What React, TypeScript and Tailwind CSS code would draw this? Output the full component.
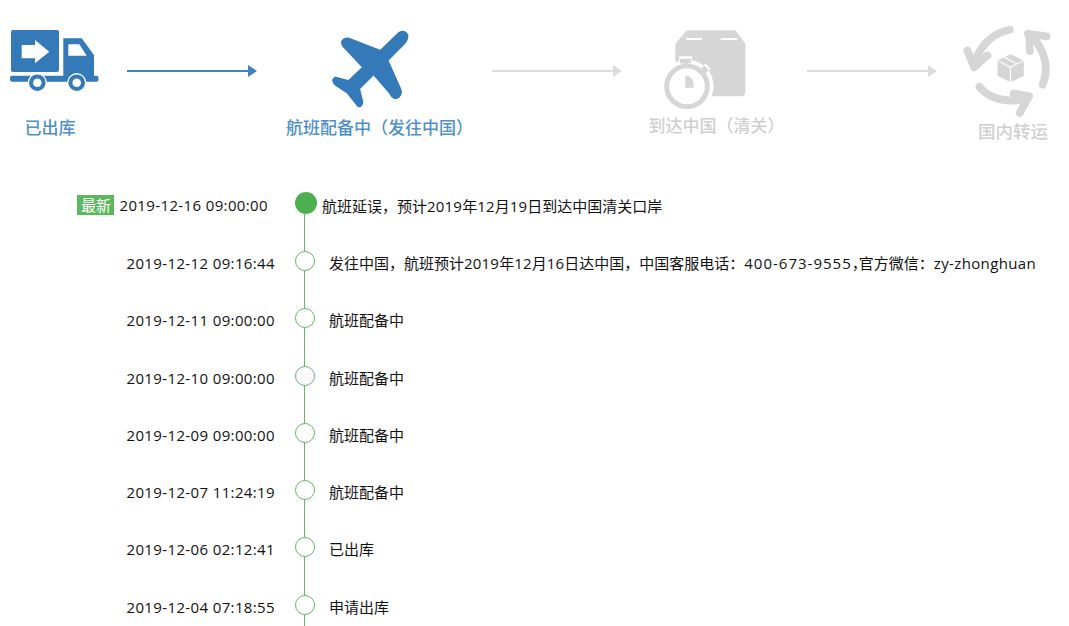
const FONT = 'font-["Open_Sans","Noto_Sans_CJK_SC",sans-serif]'

// ── Icons ──────────────────────────────────────────────────────────────────

function TruckIcon() {
  return (
    <svg width="90" height="63" viewBox="10 30 90 63">
      <rect x="11" y="30" width="48" height="42" rx="2" fill="#347ab9" />
      <path d="M21.7 45H35V40L49.3 51.7 35 63.3V58.3H21.7Z" fill="#fff" />
      <path d="M63.3 38.3H81.7L94 55V76H63.3Z" fill="#347ab9" />
      <path d="M68.3 44.3H79.3L86.7 55.7H68.3Z" fill="#fff" />
      <rect x="10" y="75.7" width="88.5" height="6" rx="2" fill="#347ab9" />
      <circle cx="37.3" cy="82.7" r="9.6" fill="#fff" />
      <circle cx="76.7" cy="82.7" r="9.6" fill="#fff" />
      <circle cx="37.3" cy="82.7" r="6.3" fill="#fff" stroke="#347ab9" strokeWidth="4" />
      <circle cx="76.7" cy="82.7" r="6.3" fill="#fff" stroke="#347ab9" strokeWidth="4" />
    </svg>
  )
}

function PlaneIcon() {
  return (
    <svg width="82" height="82" viewBox="180 50 245 245">
      <path
        d="M385 65Q405 55 413 72 418 85 405 100L355 150 393 235Q400 255 380 265 365 268 358 250L310 195 270 235 280 275Q275 295 262 288L230 248 195 225Q178 210 195 198L235 208 275 170 218 110Q205 90 225 82 235 80 245 85L330 118Z"
        fill="#347ab9"
      />
    </svg>
  )
}

function BoxIcon() {
  return (
    <svg width="85" height="85" viewBox="100 50 255 255">
      <path
        d="M175 60H320L350 100V245Q350 258 337 258H160Q140 258 140 240V100Z"
        fill="#d6d6d6"
      />
      <path d="M172 86H220M276 86H326" stroke="#fff" strokeWidth="6" />
      <circle cx="175" cy="228" r="80" fill="#fff" />
      <path d="M152 150H190M170 150V165M222 168L238 184" stroke="#fff" strokeWidth="24" />
      <path d="M154 152H188M170 152V165M222 170L236 184" stroke="#d6d6d6" strokeWidth="13" />
      <circle cx="175" cy="228" r="61" fill="#fff" stroke="#d6d6d6" strokeWidth="15" />
      <path d="M170 195Q195 197 196 232H170Z" fill="#d6d6d6" />
    </svg>
  )
}

function CycleIcon() {
  return (
    <svg width="94" height="94" viewBox="990 40 280 280">
      <g fill="none" stroke="#d6d6d6" strokeWidth="23" strokeLinecap="round" strokeLinejoin="round">
        <path d="M1138 60Q1070 72 1035 150" />
        <path d="M1012 122L1032 172 1072 136" />
        <path d="M1236 224Q1265 150 1208 84" />
        <path d="M1192 72L1248 80M1196 76L1198 124" />
        <path d="M1048 230Q1090 282 1182 268" />
        <path d="M1150 250L1196 258 1168 308" />
      </g>
      <path d="M1140 133L1180 152V198L1140 216 1102 198V152Z" fill="#d6d6d6" />
      <path d="M1102 152L1140 172 1180 152M1140 172V216M1122 142L1160 162" fill="none" stroke="#fff" strokeWidth="3" />
    </svg>
  )
}

function Arrow({ active }: { active?: boolean }) {
  const color = active ? '#3f82bc' : '#dcdcdc'
  return (
    <svg width="130" height="14" viewBox="0 0 130 14" className="shrink-0">
      <path d="M0 7H122" stroke={color} strokeWidth="2" />
      <path d="M121 1L130 7 121 13Z" fill={color} />
    </svg>
  )
}

// latin runs a little wider than the font gives on its own
function L({ children }: { children: string }) {
  return <span className="tracking-[0.37px]">{children}</span>
}

function Num({ children }: { children: string }) {
  return <span className="tracking-[0.2px]">{children}</span>
}

// ── Data ───────────────────────────────────────────────────────────────────

const ROWS = [
  {
    time: '2019-12-12 09:16:44',
    text: (
      <>
        发往中国，航班预计<Num>2019</Num>年<Num>12</Num>月<Num>16</Num>日达中国，中国客服电话：<span className="tracking-[1px]">400-673-9555</span><span className="tracking-[-8px]">，</span>官方微信：<L>zy-zhonghuan</L>
      </>
    ),
  },
  { time: '2019-12-11 09:00:00', text: '航班配备中' },
  { time: '2019-12-10 09:00:00', text: '航班配备中' },
  { time: '2019-12-09 09:00:00', text: '航班配备中' },
  { time: '2019-12-07 11:24:19', text: '航班配备中' },
  { time: '2019-12-06 02:12:41', text: '已出库' },
  { time: '2019-12-04 07:18:55', text: '申请出库' },
]

// ── Page ───────────────────────────────────────────────────────────────────

export default function App() {
  return (
    <div className={`w-[1069px] h-[626px] overflow-hidden bg-white text-[15px] text-[#111] [text-spacing-trim:space-all] ${FONT}`}>

      {/* Steps */}
      <div className="flex items-start h-[192px]">
        <div className="w-[100px] shrink-0 flex flex-col pt-[30px]">
          <div className="ml-[10px]"><TruckIcon /></div>
          <div className="mt-[23px] text-center text-[17px] leading-[24px] font-medium text-[#4f90c6]">已出库</div>
        </div>
        <div className="ml-[27px] mt-[64px]"><Arrow active /></div>
        <div className="w-[235px] shrink-0 flex flex-col items-center pt-[27px]">
          <div className="mr-[8px]"><PlaneIcon /></div>
          <div className="ml-[10px] mt-[7px] text-[17px] leading-[24px] whitespace-nowrap font-medium text-[#4f90c6]">航班配备中（发往中国）</div>
        </div>
        <div className="mt-[64px]"><Arrow /></div>
        <div className="w-[185px] shrink-0 flex flex-col items-center pt-[27px]">
          <div className="mr-[21px]"><BoxIcon /></div>
          <div className="ml-[4px] mt-[2px] text-[17px] leading-[24px] whitespace-nowrap font-medium text-[#cfcfcf]">到达中国（清关）</div>
        </div>
        <div className="mt-[64px]"><Arrow /></div>
        <div className="ml-[23px] flex flex-col pt-[23px]">
          <div><CycleIcon /></div>
          <div className="mt-[2px] ml-[18px] text-[17.5px] leading-[24px] whitespace-nowrap font-medium text-[#cfcfcf]">国内转运</div>
        </div>
      </div>

      {/* Timeline */}
      <div className="flex h-[59px]">
        <div className="w-[268px] shrink-0 flex justify-end items-start gap-[5px] pt-[3px] leading-[20px]">
          <span className="bg-[#5cb85c] text-white px-[3.5px] h-[20px]">最新</span>
          <L>2019-12-16 09:00:00</L>
        </div>
        <div className="ml-[27px] flex flex-col">
          <div className="w-[22px] h-[22px] rounded-full bg-[#4caf50] shrink-0" />
          <div className="ml-[9px] w-px flex-1 bg-[#6cb26c]" />
        </div>
        <div className="ml-[5px] pt-[4px] leading-[20px]">
          航班延误，预计<Num>2019</Num>年<Num>12</Num>月<Num>19</Num>日到达中国清关口岸
        </div>
      </div>
      {ROWS.map(row => (
        <div key={row.time} className="flex h-[57.3px]">
          <div className="w-[275px] shrink-0 text-right pt-[2px] leading-[20px]"><L>{row.time}</L></div>
          <div className="ml-[20px] flex flex-col">
            <div className="w-[20px] h-[20px] rounded-full border border-[#6cb26c] bg-white shrink-0" />
            <div className="ml-[9px] w-px flex-1 bg-[#6cb26c]" />
          </div>
          <div className="ml-[14px] pt-[2px] leading-[20px] whitespace-nowrap">{row.text}</div>
        </div>
      ))}
    </div>
  )
}
